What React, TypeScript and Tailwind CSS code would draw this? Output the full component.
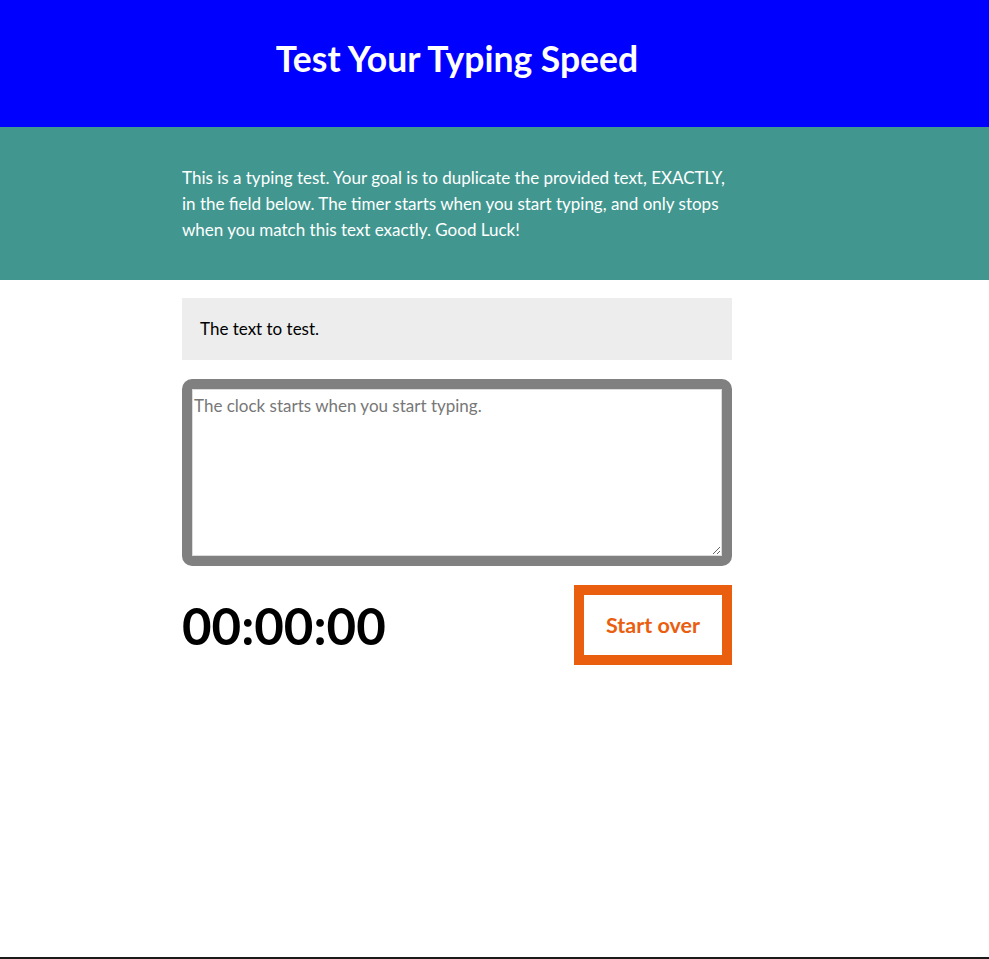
import { useState } from 'react';

export default function App() {
  const [typed, setTyped] = useState('');

  return (
    <div className="min-h-[959px] bg-white flex flex-col font-['Source_Sans_Pro','Lato',sans-serif]">
      {/* Masthead */}
      <header className="bg-[#0000ff] h-[127px] flex items-center">
        <div className="w-[550px] ml-[182px] text-center">
          <h1 className="text-[35.5px] font-bold text-white leading-none -mt-[10px]">Test Your Typing Speed</h1>
        </div>
      </header>

      {/* Intro */}
      <section className="bg-[#419790] h-[153px] pt-[38px]">
        <p className="w-[550px] ml-[182px] text-[17px] leading-[26px] text-white">
          This is a typing test. Your goal is to duplicate the provided text, EXACTLY, in the field below. The timer starts when you start typing, and only stops when you match this text exactly. Good Luck!
        </p>
      </section>

      <main className="flex-1 w-[550px] ml-[182px] pt-[18px] flex flex-col">
        <div className="bg-[#ededed] h-[62px] px-[18px] flex items-center">
          <p className="text-[17px] text-black">The text to test.</p>
        </div>

        <div className="mt-[19px] bg-[#808080] rounded-[10px] p-[10px]">
          <textarea
            value={typed}
            onChange={(e) => setTyped(e.target.value)}
            placeholder="The clock starts when you start typing."
            className="block w-full h-[167px] bg-white border border-[#dcdcdc] px-[1px] py-[3px] text-[17px] text-black placeholder:text-[#777] outline-none resize-y"
          />
        </div>

        <div className="mt-[19px] flex items-center justify-between">
          <div className="text-[51px] font-bold text-black leading-none">00:00:00</div>
          <button
            onClick={() => setTyped('')}
            className="w-[158px] h-[80px] border-[10px] border-[#e95e0f] bg-white text-[#e95e0f] text-[21.5px] font-bold"
          >
            Start over
          </button>
        </div>
      </main>

      <footer className="h-[2px] bg-[#1a1a1a]" />
    </div>
  );
}
